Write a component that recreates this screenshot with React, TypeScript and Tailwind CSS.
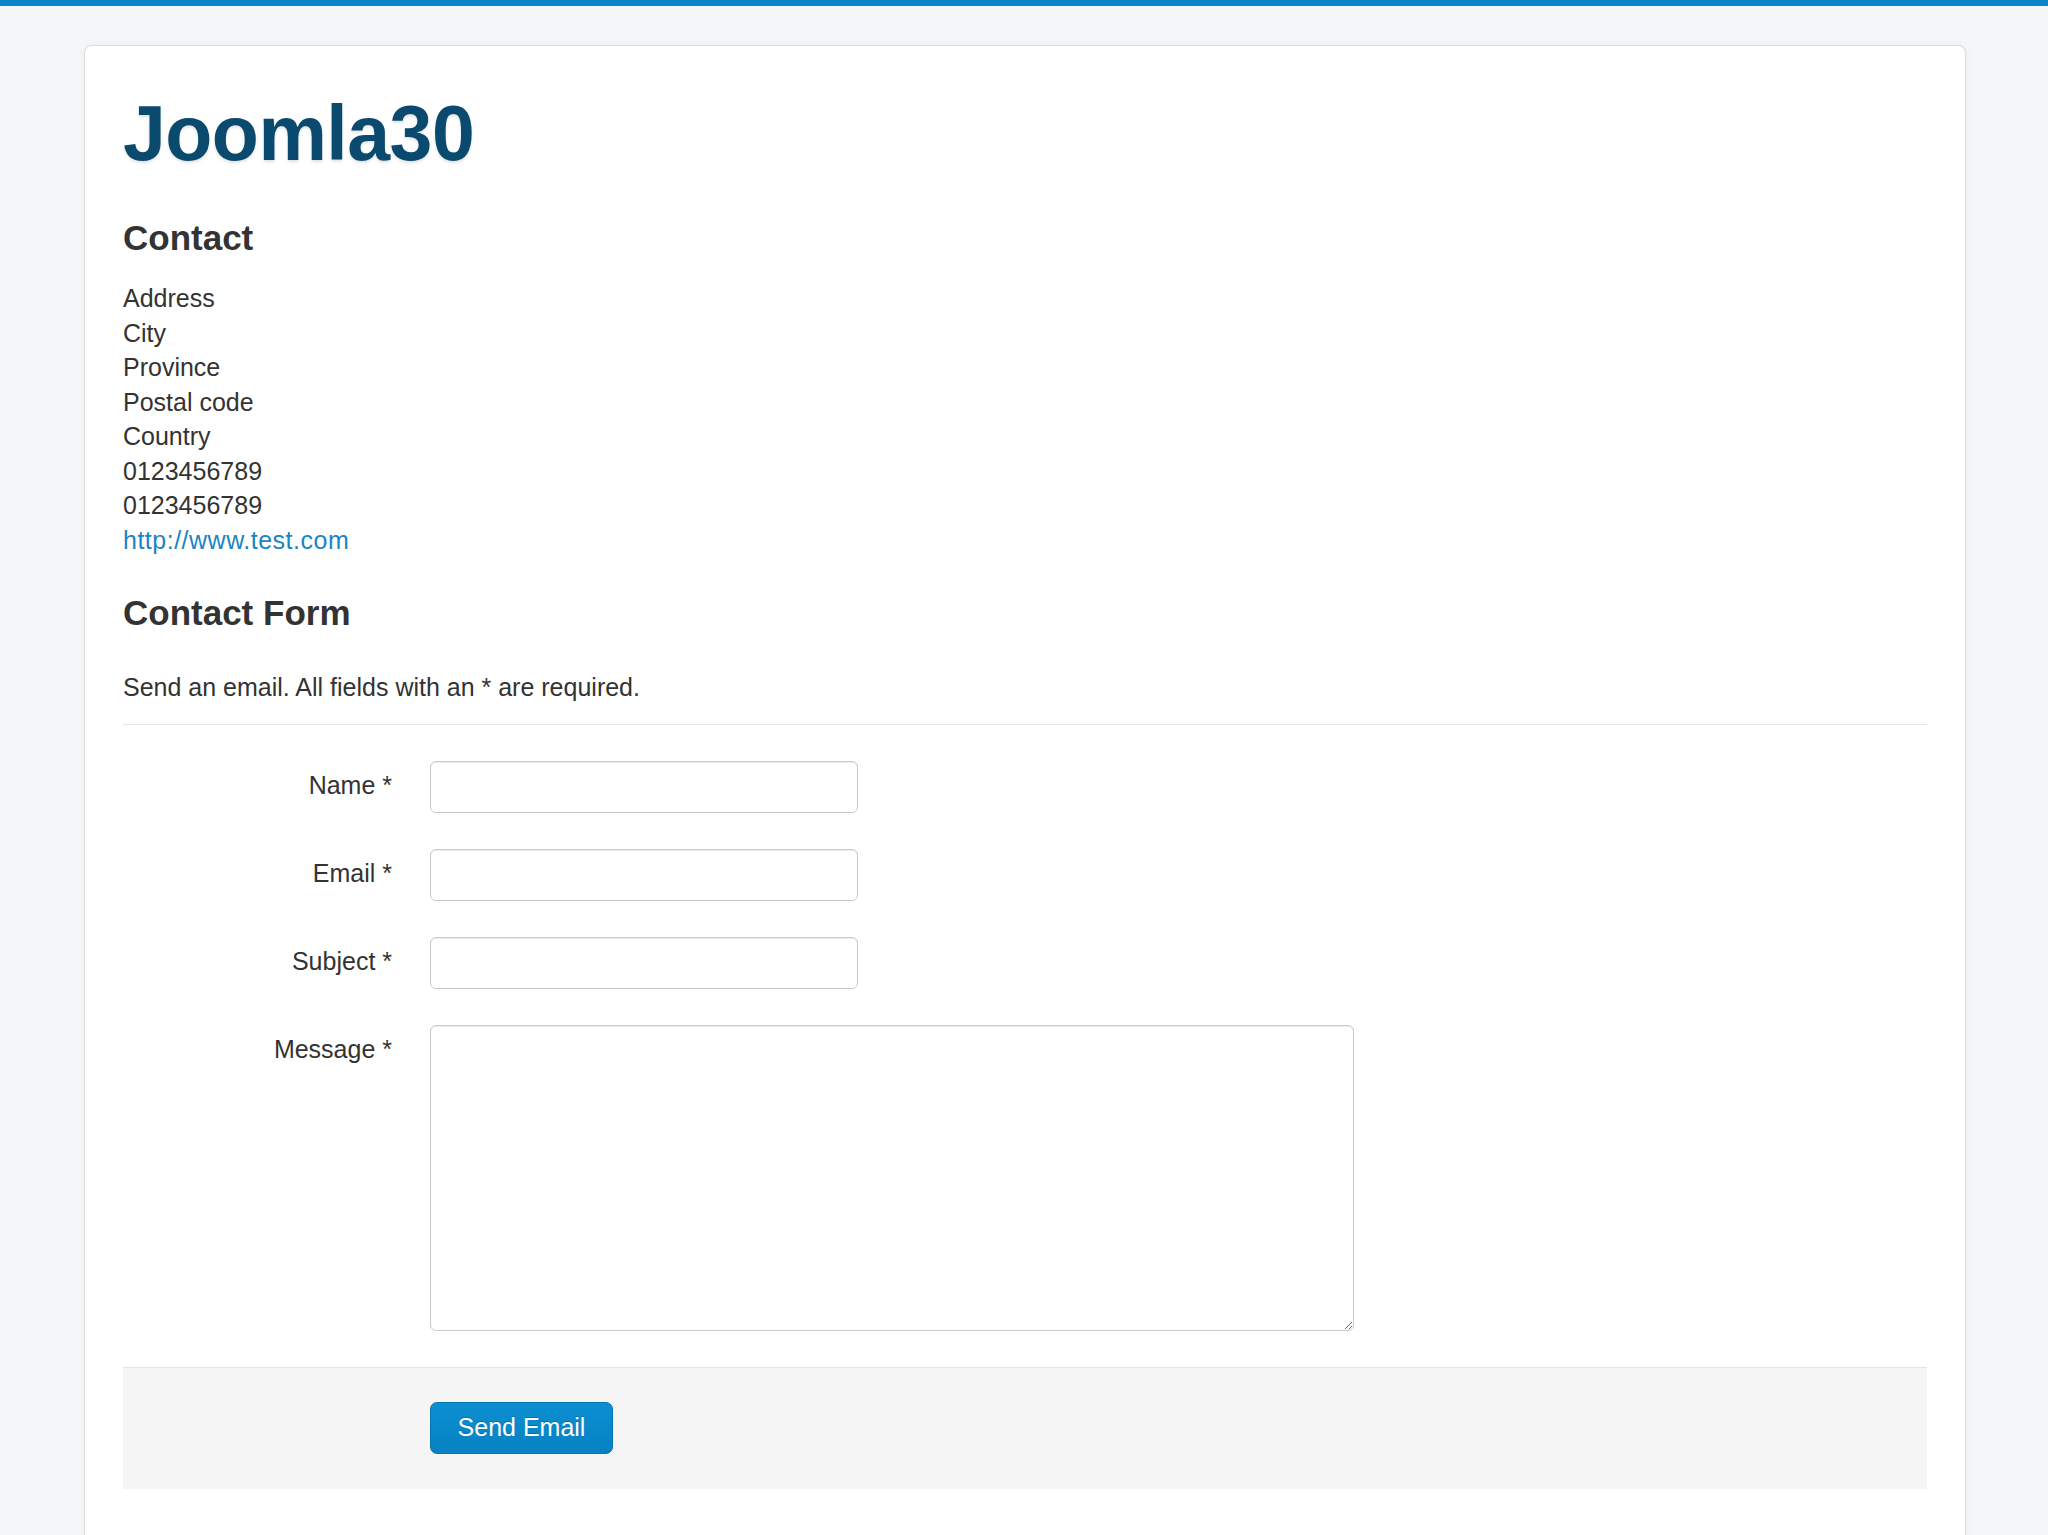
export default function App() {
  const fields = [
    { label: 'Name *', id: 'name' },
    { label: 'Email *', id: 'email' },
    { label: 'Subject *', id: 'subject' },
  ]

  return (
    <div className="h-[1535px] overflow-hidden bg-[#f4f6f7] font-['Liberation_Sans',Arial,sans-serif] text-[#333]">
      {/* top bar */}
      <div className="h-[6px] bg-[#0a86c6]" />

      <div className="pt-[39px]">
        <div className="ml-[84px] w-[1882px] rounded-[8px] border border-[#dcdcdc] bg-white px-[38px] pt-[49px] pb-[200px] shadow-[0_0_6px_rgba(0,0,0,0.05)]">
          {/* site title */}
          <h1 className="text-[77px] leading-[77px] font-bold tracking-[-0.5px] text-[#0b4a6f] [text-shadow:0_2px_3px_rgba(0,0,0,0.12)]">
            Joomla30
          </h1>

          {/* contact info */}
          <h2 className="mt-[46px] text-[35px] leading-[40px] font-bold">Contact</h2>
          <div className="mt-[23px] text-[25px] leading-[34.5px]">
            <div>Address</div>
            <div>City</div>
            <div>Province</div>
            <div>Postal code</div>
            <div>Country</div>
            <div>0123456789</div>
            <div>0123456789</div>
            <a href="#" className="block tracking-[0.5px] text-[#1a84c4]">
              http://www.test.com
            </a>
          </div>

          {/* contact form */}
          <h2 className="mt-[36px] text-[35px] leading-[40px] font-bold">Contact Form</h2>
          <p className="mt-[37px] text-[25px] leading-[34.5px]">
            Send an email. All fields with an * are required.
          </p>
          <div className="mt-[19px] border-t border-[#e5e5e5]" />

          <form className="mt-[36px]" onSubmit={(e) => e.preventDefault()}>
            {fields.map((f) => (
              <div key={f.id} className="mb-[36px] flex">
                <label htmlFor={f.id} className="w-[269px] pt-[7px] text-right text-[25px] leading-[34.5px]">
                  {f.label}
                </label>
                <input
                  id={f.id}
                  type="text"
                  className="ml-[38px] h-[52px] w-[428px] rounded-[6px] border border-[#c9c9c9] bg-white px-[10px] text-[25px] shadow-[inset_0_1px_1px_rgba(0,0,0,0.075)] outline-none"
                />
              </div>
            ))}

            <div className="flex">
              <label htmlFor="message" className="w-[269px] pt-[7px] text-right text-[25px] leading-[34.5px]">
                Message *
              </label>
              <textarea
                id="message"
                className="ml-[38px] h-[306px] w-[924px] rounded-[6px] border border-[#c9c9c9] bg-white px-[10px] py-[8px] text-[25px] shadow-[inset_0_1px_1px_rgba(0,0,0,0.075)] outline-none"
              />
            </div>

            {/* form actions */}
            <div className="mt-[36px] border-t border-[#e5e5e5] bg-[#f5f5f5] pt-[34px] pb-[35px] pl-[307px]">
              <button
                type="submit"
                className="h-[52px] w-[183px] rounded-[7px] border border-[#0776b0] bg-[linear-gradient(to_bottom,#0b8fd1,#0781c2)] text-[25px] text-white [text-shadow:0_-1px_0_rgba(0,0,0,0.2)]"
              >
                Send Email
              </button>
            </div>
          </form>
        </div>
      </div>
    </div>
  )
}
